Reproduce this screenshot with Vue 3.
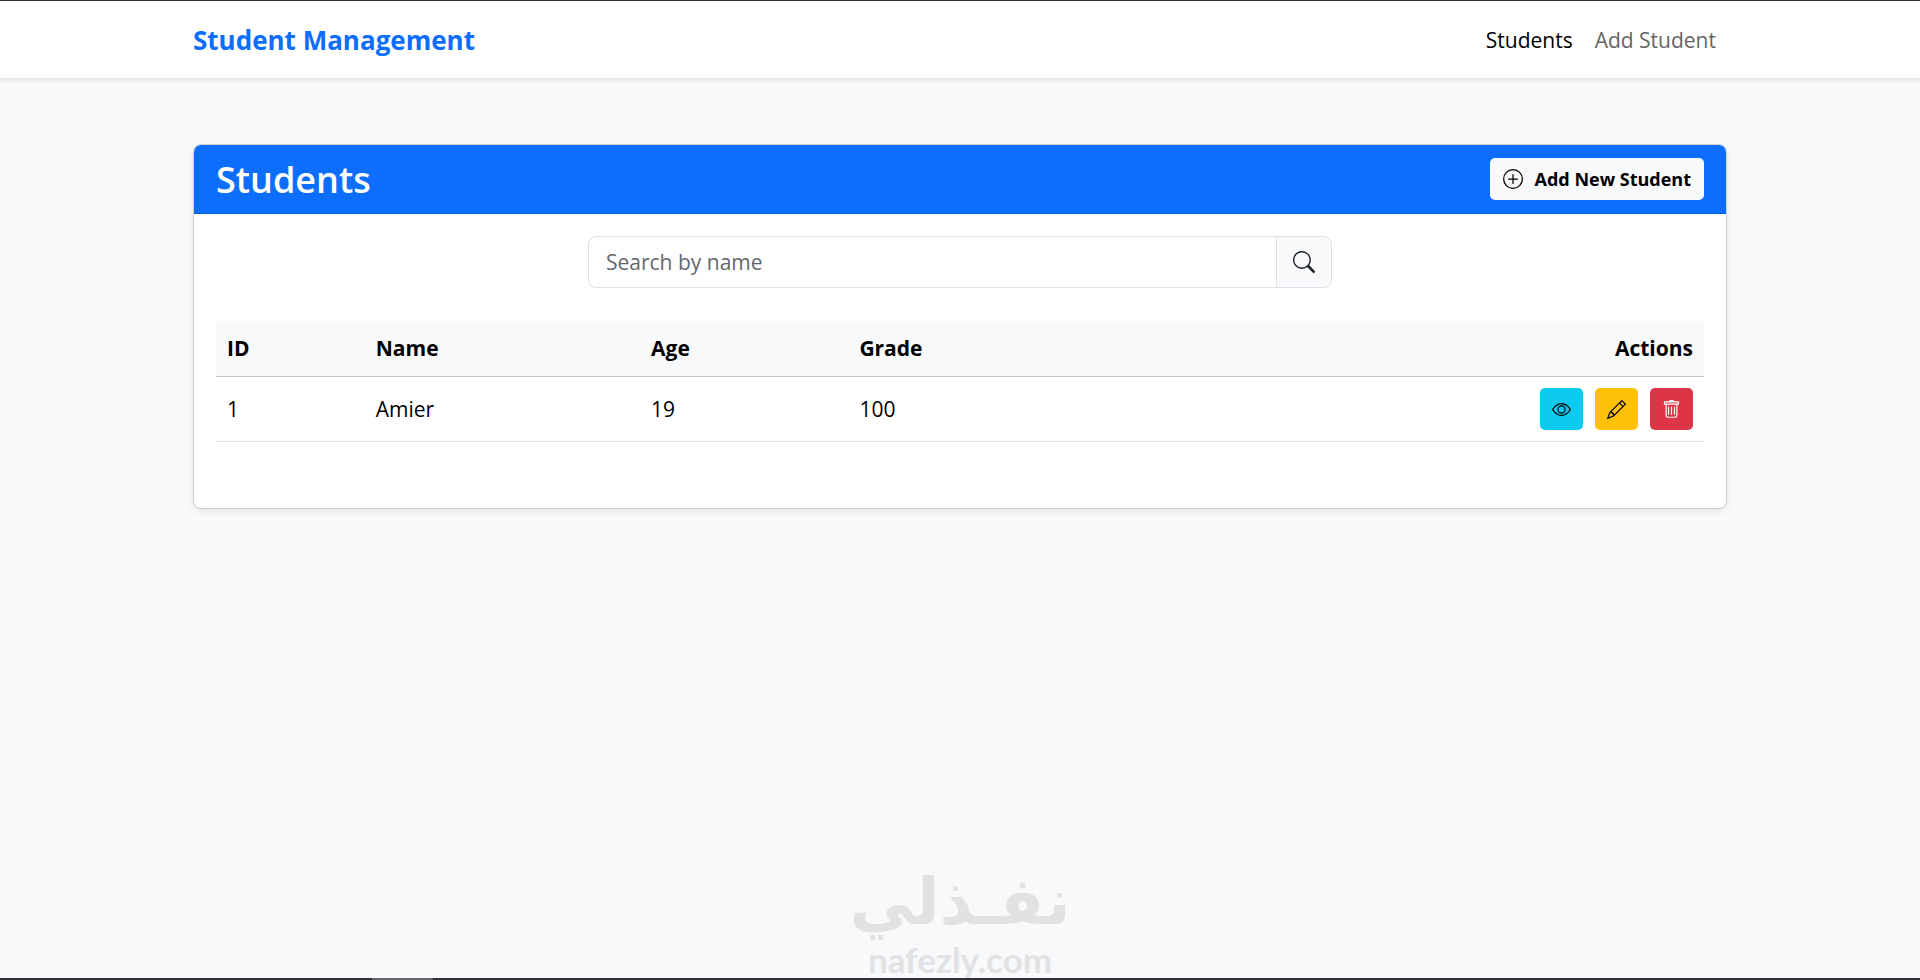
<script setup>
import { ref, computed } from 'vue'

const query = ref('')
const students = ref([{ id: 1, name: 'Amier', age: 19, grade: 100 }])
const filtered = computed(() =>
  students.value.filter((s) => s.name.toLowerCase().includes(query.value.toLowerCase()))
)
</script>

<template>
  <div class="page">
    <header class="navbar">
      <div class="container navbar-inner">
        <a class="brand" href="#">Student Management</a>
        <nav class="links">
          <a class="link active" href="#students">Students</a>
          <a class="link" href="#add">Add Student</a>
        </nav>
      </div>
    </header>

    <main class="container main">
      <section class="card">
        <div class="card-header">
          <h1>Students</h1>
          <button class="btn add" type="button">
            <svg class="icon-add" viewBox="0 0 16 16" fill="currentColor" aria-hidden="true">
              <path d="M8 15A7 7 0 1 1 8 1a7 7 0 0 1 0 14m0 1A8 8 0 1 0 8 0a8 8 0 0 0 0 16" />
              <path d="M8 4a.5.5 0 0 1 .5.5v3h3a.5.5 0 0 1 0 1h-3v3a.5.5 0 0 1-1 0v-3h-3a.5.5 0 0 1 0-1h3v-3A.5.5 0 0 1 8 4" />
            </svg>
            <span>Add New Student</span>
          </button>
        </div>
        <div class="card-body">
          <form class="search" @submit.prevent>
            <input v-model="query" type="text" placeholder="Search by name" aria-label="Search by name" />
            <button type="submit" aria-label="Search">
              <svg class="icon-search" viewBox="0 0 16 16" fill="currentColor" aria-hidden="true">
                <path d="M11.742 10.344a6.5 6.5 0 1 0-1.397 1.398h-.001q.044.06.098.115l3.85 3.85a1 1 0 0 0 1.415-1.414l-3.85-3.85a1 1 0 0 0-.115-.1zM12 6.500a5.500 5.500 0 1 1-11 0 5.500 5.500 0 0 1 11 0" />
              </svg>
            </button>
          </form>

          <table>
            <thead>
              <tr>
                <th class="col-id" scope="col">ID</th>
                <th class="col-name" scope="col">Name</th>
                <th class="col-age" scope="col">Age</th>
                <th scope="col">Grade</th>
                <th class="end" scope="col">Actions</th>
              </tr>
            </thead>
            <tbody>
              <tr v-for="s in filtered" :key="s.id">
                <td>{{ s.id }}</td>
                <td>{{ s.name }}</td>
                <td>{{ s.age }}</td>
                <td>{{ s.grade }}</td>
                <td>
                  <div class="actions">
                    <button class="btn view" type="button" aria-label="View">
                      <svg class="icon" viewBox="0 0 16 16" fill="currentColor" aria-hidden="true">
                        <path d="M16 8s-3-5.500-8-5.500S0 8 0 8s3 5.500 8 5.500S16 8 16 8M1.173 8a13 13 0 0 1 1.660-2.043C4.120 4.668 5.880 3.500 8 3.500s3.879 1.168 5.168 2.457A13 13 0 0 1 14.828 8q-.086.130-.195.288c-.335.480-.830 1.120-1.465 1.755C11.879 11.332 10.119 12.500 8 12.500s-3.879-1.168-5.168-2.457A13 13 0 0 1 1.172 8z" />
                        <path d="M8 5.500a2.500 2.500 0 1 0 0 5 2.500 2.500 0 0 0 0-5M4.500 8a3.500 3.500 0 1 1 7 0 3.500 3.500 0 0 1-7 0" />
                      </svg>
                    </button>
                    <button class="btn edit" type="button" aria-label="Edit">
                      <svg class="icon" viewBox="0 0 16 16" fill="currentColor" aria-hidden="true">
                        <path d="M12.146.146a.5.5 0 0 1 .708 0l3 3a.5.5 0 0 1 0 .708l-10 10a.5.5 0 0 1-.168.110l-5 2a.5.5 0 0 1-.650-.650l2-5a.5.5 0 0 1 .110-.168zM11.207 2.500 13.500 4.793 14.793 3.500 12.500 1.207zm1.586 3L10.500 3.207 4 9.707V10h.5a.5.5 0 0 1 .5.5v.5h.5a.5.5 0 0 1 .5.5v.5h.293zm-9.761 5.175-.106.106-1.528 3.821 3.821-1.528.106-.106A.5.5 0 0 1 5 12.500V12h-.5a.5.5 0 0 1-.5-.5V11h-.5a.5.5 0 0 1-.468-.325" />
                      </svg>
                    </button>
                    <button class="btn delete" type="button" aria-label="Delete">
                      <svg class="icon" viewBox="0 0 16 16" fill="currentColor" aria-hidden="true">
                        <path d="M5.500 5.500A.5.5 0 0 1 6 6v6a.5.5 0 0 1-1 0V6a.5.5 0 0 1 .5-.5m2.500 0a.5.5 0 0 1 .5.5v6a.5.5 0 0 1-1 0V6a.5.5 0 0 1 .5-.5m3 .5a.5.5 0 0 0-1 0v6a.5.5 0 0 0 1 0z" />
                        <path d="M14.500 3a1 1 0 0 1-1 1H13v9a2 2 0 0 1-2 2H5a2 2 0 0 1-2-2V4h-.5a1 1 0 0 1-1-1V2a1 1 0 0 1 1-1H6a1 1 0 0 1 1-1h2a1 1 0 0 1 1 1h3.500a1 1 0 0 1 1 1zM4.118 4 4 4.059V13a1 1 0 0 0 1 1h6a1 1 0 0 0 1-1V4.059L11.882 4zM2.500 3h11V2h-11z" />
                      </svg>
                    </button>
                  </div>
                </td>
              </tr>
            </tbody>
          </table>
        </div>
      </section>
    </main>

    <div class="watermark">
      <span class="mark-ar" lang="ar" dir="rtl">نفـذلي</span>
      <span class="mark-en">nafezly.com</span>
    </div>
    <div class="bottom-edge"><span class="edge-thumb"></span></div>
  </div>
</template>

<style>
body {
  margin: 0;
  background: #f8f9fb;
}
</style>

<style scoped>
.page {
  box-sizing: border-box;
  position: relative;
  min-height: 100vh;
  overflow: hidden;
  border-top: 1px solid #333238;
  background: #f8f9fb;
  color: #000;
  font: 21px/33px "Open Sans", "Noto Sans", sans-serif;
}
.container {
  box-sizing: border-box;
  width: 80%;
  max-width: 1534px;
  margin: 0 auto;
}
.navbar {
  background: #fff;
  box-shadow: 0 2px 5px rgba(0, 0, 0, 0.1);
}
.navbar-inner {
  box-sizing: border-box;
  display: flex;
  align-items: center;
  justify-content: space-between;
  min-height: 77px;
  padding-top: 2px;
}
.brand {
  color: #0d6efd;
  font-size: 26px;
  font-weight: 700;
  text-decoration: none;
}
.links {
  display: flex;
  gap: 22px;
  padding-right: 11px;
}
.link {
  color: #656565;
  text-decoration: none;
}
.link.active {
  color: #000;
}
.main {
  padding-top: 66px;
}
.card {
  overflow: hidden;
  border: 1px solid #cfcfd1;
  border-radius: 8px;
  background: #fff;
  box-shadow: 0 3px 6px rgba(0, 0, 0, 0.08);
}
.card-header {
  display: flex;
  align-items: center;
  justify-content: space-between;
  min-height: 68px;
  padding: 0 22px;
  border-bottom: 1px solid #0b5cd6;
  background: #0d6efd;
  color: #fff;
}
h1 {
  margin: 0;
  padding-top: 2px;
  font-size: 36px;
  font-weight: 600;
  line-height: 46px;
}
.btn {
  display: flex;
  align-items: center;
  justify-content: center;
  height: 42px;
  padding: 0 12px;
  border: 0;
  border-radius: 5px;
  color: #000;
  font-family: inherit;
}
.add {
  gap: 12px;
  padding: 0 13px;
  background: #f8f9fa;
  font-size: 18px;
  font-weight: 700;
}
.icon-add {
  width: 20px;
  height: 20px;
}
.card-body {
  padding: 22px 22px 66px;
}
.search {
  display: flex;
  width: 50%;
  margin: 0 auto 33px;
}
.search input {
  box-sizing: border-box;
  flex: 1;
  min-width: 0;
  height: 52px;
  padding: 0 17px;
  border: 1px solid #dee2e6;
  border-right: 0;
  border-radius: 8px 0 0 8px;
  background: #fff;
  color: #212529;
  font: inherit;
}
.search input::placeholder {
  color: #63686d;
  opacity: 1;
}
.search button {
  display: flex;
  align-items: center;
  justify-content: center;
  box-sizing: border-box;
  width: 56px;
  padding: 0;
  border: 1px solid #dee2e6;
  border-radius: 0 8px 8px 0;
  background: #f8f9fa;
  color: #212529;
}
.icon-search {
  width: 22px;
  height: 22px;
}
table {
  width: 100%;
  border-collapse: collapse;
  table-layout: fixed;
}
th,
td {
  box-sizing: border-box;
  padding: 11px;
  text-align: left;
  vertical-align: middle;
}
th {
  border-bottom: 1px solid #c4c6ca;
  background: #f8f9fa;
  font-weight: 700;
}
td {
  border-bottom: 1px solid #dfe1e4;
}
.col-id {
  width: 10%;
}
.col-name {
  width: 18.5%;
}
.col-age {
  width: 14%;
}
.end {
  text-align: right;
}
.actions {
  display: flex;
  justify-content: flex-end;
  gap: 12px;
}
.actions .btn {
  width: 43px;
  padding: 0;
}
.icon {
  width: 19px;
  height: 19px;
}
.view {
  background: #0dcaf0;
}
.edit {
  background: #ffc107;
}
.delete {
  background: #dc3545;
  color: #fff;
}
.watermark {
  position: absolute;
  right: 0;
  bottom: 0;
  left: 0;
  display: flex;
  flex-direction: column;
  align-items: center;
  color: #e1e2e4;
  font-weight: 700;
  pointer-events: none;
}
.mark-ar {
  font-family: "DejaVu Sans", sans-serif;
  font-size: 65px;
  line-height: 74px;
}
.mark-en {
  font-family: Lato, sans-serif;
  font-size: 35px;
  line-height: 41px;
}
.bottom-edge {
  position: absolute;
  right: 0;
  bottom: 0;
  left: 0;
  height: 2px;
  background: #333238;
}
.edge-thumb {
  display: block;
  width: 61px;
  height: 2px;
  margin-left: 372px;
  background: #66656a;
}
</style>
